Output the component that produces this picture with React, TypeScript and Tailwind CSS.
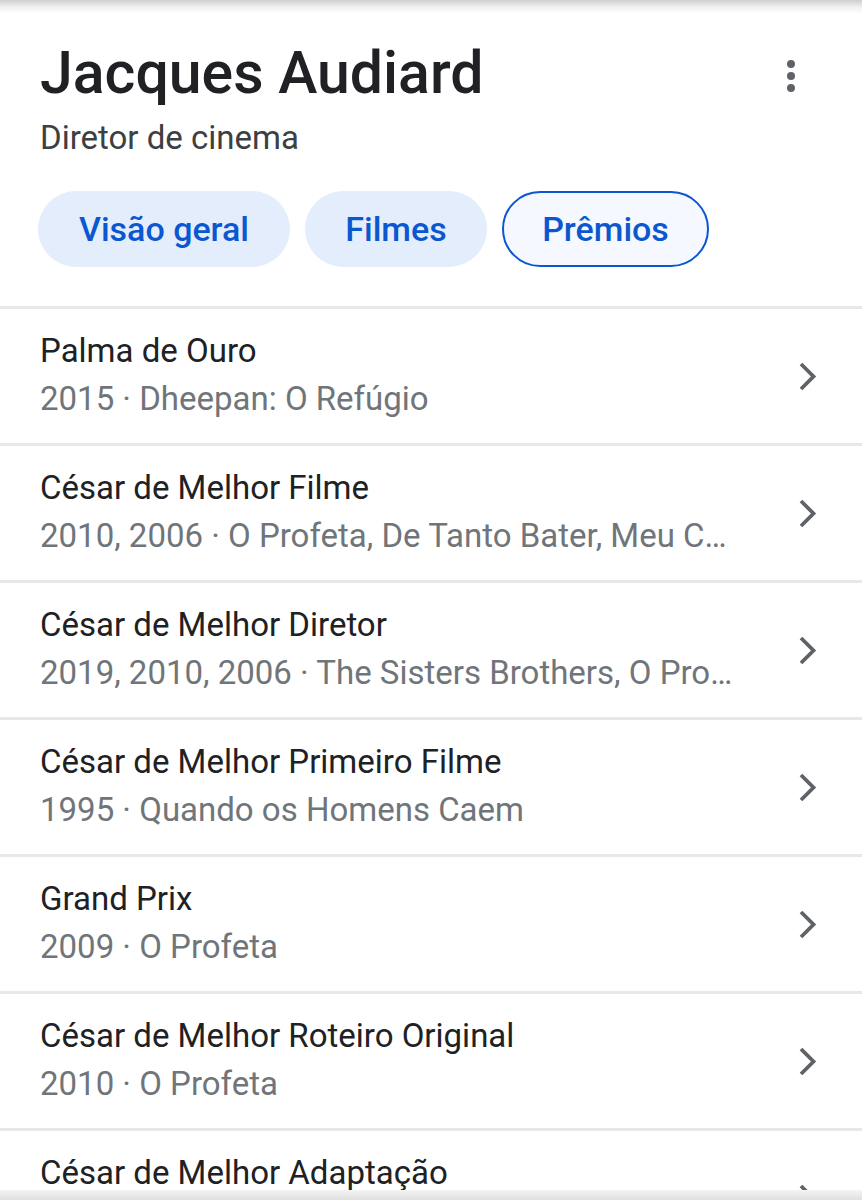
import React from "react";

const rows = [
  { t: "Palma de Ouro", s: "2015 · Dheepan: O Refúgio" },
  { t: "César de Melhor Filme", s: "2010, 2006 · O Profeta, De Tanto Bater, Meu Coração Parou" },
  { t: "César de Melhor Diretor", s: "2019, 2010, 2006 · The Sisters Brothers, O Profeta, De Tanto Bater" },
  { t: "César de Melhor Primeiro Filme", s: "1995 · Quando os Homens Caem" },
  { t: "Grand Prix", s: "2009 · O Profeta" },
  { t: "César de Melhor Roteiro Original", s: "2010 · O Profeta" },
  { t: "César de Melhor Adaptação", s: "2006 · De Tanto Bater" },
];

function Chevron() {
  return (
    <svg width="40" height="40" viewBox="0 0 40 40" className="shrink-0">
      <path d="M15 8 L27.5 20.5 L15 33" fill="none" stroke="#5f6368" strokeWidth="3.8" strokeLinecap="butt" strokeLinejoin="miter" />
    </svg>
  );
}

export default function App() {
  return (
    <div className="relative w-[862px] h-[1200px] overflow-hidden bg-white" style={{ fontFamily: "Roboto, 'Noto Sans', sans-serif" }}>
      <div className="h-[14px] bg-gradient-to-b from-[#cfcfcf] via-[#f0f0f0] to-white" />
      <div className="flex items-start justify-between pl-[40px] pr-[40px] pt-[25px]">
        <div className="text-[59px] leading-[68px] text-[#202124] font-medium">Jacques Audiard</div>
        <div className="flex flex-col gap-[4px] mt-[21px] mr-[27px]">
          <span className="w-[8px] h-[8px] rounded-full bg-[#5f6368]" />
          <span className="w-[8px] h-[8px] rounded-full bg-[#5f6368]" />
          <span className="w-[8px] h-[8px] rounded-full bg-[#5f6368]" />
        </div>
      </div>
      <div className="pl-[40px] mt-[9px] text-[33px] leading-[44px] text-[#3c4043]">Diretor de cinema</div>
      <div className="flex gap-[15px] pl-[38px] mt-[31px]">
        <div className="h-[76px] w-[252px] rounded-full bg-[#e3edfc] flex items-center justify-center text-[34px] font-medium text-[#0b57d0]">Visão geral</div>
        <div className="h-[76px] w-[182px] rounded-full bg-[#e3edfc] flex items-center justify-center text-[34px] font-medium text-[#0b57d0]">Filmes</div>
        <div className="h-[76px] w-[207px] rounded-full bg-[#f5f8fe] border-[2.5px] border-[#0b57d0] flex items-center justify-center text-[34px] font-medium text-[#0b57d0]">Prêmios</div>
      </div>
      <div className="mt-[39px]">
        {rows.map((r) => (
          <div key={r.t} className="border-t-[3px] border-[#e8e8e8] h-[137px] flex items-center pl-[40px] pr-[36px]">
            <div className="flex-1 min-w-0 pr-[50px] pb-[2px]">
              <div className="text-[33px] leading-[48px] text-[#202124] truncate">{r.t}</div>
              <div className="text-[33px] leading-[48px] text-[#70757a] truncate">{r.s}</div>
            </div>
            <Chevron />
          </div>
        ))}
      </div>
      <div className="absolute left-0 right-0 bottom-0 h-[10px] bg-gradient-to-b from-[#f4f4f4] to-[#e0e0e0]" />
    </div>
  );
}
